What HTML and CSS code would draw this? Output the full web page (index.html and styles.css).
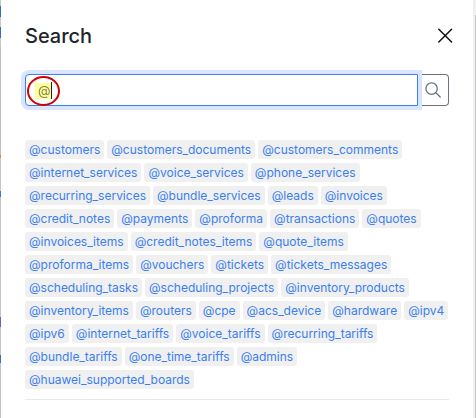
FILE: index.html
```html
<!DOCTYPE html>
<html lang="en">
<head>
<meta charset="utf-8">
<meta name="viewport" content="width=device-width, initial-scale=1">
<title>Search</title>
<link rel="stylesheet" href="styles.css">
</head>
<body>
<div class="backdrop"></div>
<main class="drawer">
  <header class="header">
    <h1 class="title">Search</h1>
    <button class="close" type="button" aria-label="Close">
      <svg width="16" height="16" viewBox="0 0 16 16" fill="none" stroke="#111" stroke-width="1.5" stroke-linecap="round"><path d="M1.8 1.2 14.6 14M14.6 1.2 1.8 14"/></svg>
    </button>
  </header>
  <form class="search">
    <div class="field">
      <input class="input" type="text" value="@" aria-label="Search" autocomplete="off">
      <span class="mark"></span>
      <span class="caret"></span>
      <span class="ring"></span>
    </div>
    <button class="submit" type="button" aria-label="Run search">
      <svg width="16" height="16" viewBox="0 0 16 16" fill="none" stroke="#6c757d" stroke-width="1.3" stroke-linecap="round"><circle cx="6.6" cy="6.6" r="5.7"/><path d="m10.8 10.8 4.4 4.2"/></svg>
    </button>
  </form>
  <nav class="tags" aria-label="Search scopes">
    <a class="tag" href="#">@customers</a>
    <a class="tag" href="#">@customers_documents</a>
    <a class="tag" href="#">@customers_comments</a>
    <a class="tag" href="#">@internet_services</a>
    <a class="tag" href="#">@voice_services</a>
    <a class="tag" href="#">@phone_services</a>
    <a class="tag" href="#">@recurring_services</a>
    <a class="tag" href="#">@bundle_services</a>
    <a class="tag" href="#">@leads</a>
    <a class="tag" href="#">@invoices</a>
    <a class="tag" href="#">@credit_notes</a>
    <a class="tag" href="#">@payments</a>
    <a class="tag" href="#">@proforma</a>
    <a class="tag" href="#">@transactions</a>
    <a class="tag" href="#">@quotes</a>
    <a class="tag" href="#">@invoices_items</a>
    <a class="tag" href="#">@credit_notes_items</a>
    <a class="tag" href="#">@quote_items</a>
    <a class="tag" href="#">@proforma_items</a>
    <a class="tag" href="#">@vouchers</a>
    <a class="tag" href="#">@tickets</a>
    <a class="tag" href="#">@tickets_messages</a>
    <a class="tag" href="#">@scheduling_tasks</a>
    <a class="tag" href="#">@scheduling_projects</a>
    <a class="tag" href="#">@inventory_products</a>
    <a class="tag" href="#">@inventory_items</a>
    <a class="tag" href="#">@routers</a>
    <a class="tag" href="#">@cpe</a>
    <a class="tag" href="#">@acs_device</a>
    <a class="tag" href="#">@hardware</a>
    <a class="tag" href="#">@ipv4</a>
    <a class="tag" href="#">@ipv6</a>
    <a class="tag" href="#">@internet_tariffs</a>
    <a class="tag" href="#">@voice_tariffs</a>
    <a class="tag" href="#">@recurring_tariffs</a>
    <a class="tag" href="#">@bundle_tariffs</a>
    <a class="tag" href="#">@one_time_tariffs</a>
    <a class="tag" href="#">@admins</a>
    <a class="tag" href="#">@huawei_supported_boards</a>
  </nav>
  <hr class="divider">
</main>
<div class="scrollbar"><div class="thumb"></div></div>
</body>
</html>
```
FILE: styles.css
```css
* {
  box-sizing: border-box;
}

body {
  display: flex;
  min-height: 100vh;
  margin: 0;
  overflow: hidden;
  background: #fff;
  color: #212529;
  font-family: Inter, "Liberation Sans", sans-serif;
  font-size: 12px;
}

/* Sliver of the dimmed page behind the drawer */
.backdrop {
  width: 1px;
  background: linear-gradient(
    #c8c8c8 6px, #2f6bd0 6px 17px, #c9cbc6 17px 27px, #2f6bd0 27px 38px,
    #c9cbc6 38px 46px, #bfbfc6 46px 155px, #e58a3c 155px 158px,
    #c6c6c9 158px 191px, #2f7fd8 191px 197px, #c6c6c9 197px 317px,
    #7a55c4 317px 327px, #c6c6c9 327px 355px, #4a62cc 355px 363px,
    #c1c1c8 363px
  );
}

.drawer {
  flex: 1;
  min-width: 0;
  padding: 24px 24px 0;
}

.header {
  display: flex;
  align-items: center;
  justify-content: space-between;
  margin-bottom: 26px;
}

.title {
  margin: 0;
  font-size: 20px;
  font-weight: 500;
  line-height: 24px;
}

.close {
  display: flex;
  margin-right: -4px;
  padding: 0;
  border: 0;
  background: none;
}

.search {
  display: flex;
  margin-bottom: 34px;
}

.field {
  position: relative;
  z-index: 1;
  flex: 1;
}

.input {
  display: block;
  width: 100%;
  height: 32px;
  padding: 0 12px;
  border: 1px solid #3b7ff0;
  border-radius: 4px 0 0 4px;
  outline: 0;
  box-shadow: 0 0 0 4px #d8e5fc;
  background: #fff;
  color: #868b91;
  font: inherit;
  font-size: 13px;
}

/* Highlight, caret and ring lie over the typed text */
.mark,
.caret,
.ring {
  position: absolute;
  pointer-events: none;
}

.mark {
  top: 9px;
  left: 10px;
  width: 17px;
  height: 16px;
  background: #ffff99;
  mix-blend-mode: multiply;
}

.caret {
  top: 8px;
  left: 26px;
  width: 1px;
  height: 17px;
  background: #222;
}

.ring {
  top: 2px;
  left: 2px;
  width: 33px;
  height: 30px;
  border: 2px solid #d40000;
  border-radius: 50%;
}

.submit {
  display: flex;
  align-items: center;
  justify-content: center;
  width: 31px;
  height: 32px;
  padding: 0 6px 0 0;
  border: 1px solid #6c757d;
  border-left: 0;
  border-radius: 0 4px 4px 0;
  background: #fff;
}

.submit svg {
  margin-left: 6px;
}

.tags {
  display: flex;
  flex-wrap: wrap;
  gap: 4px 3px;
}

.tag {
  padding: 0 4px;
  border-radius: 3px;
  background: #f0f0f0;
  color: #3b7fef;
  line-height: 19px;
  text-decoration: none;
}

.divider {
  margin: 10px 0 0;
  border: 0;
  border-top: 1px solid #e9e9e9;
}

.scrollbar {
  width: 3px;
  padding: 15px 0 0 2px;
  background: #f0f0f0;
}

.thumb {
  height: 100%;
  background: #c1c1c1;
}
```
